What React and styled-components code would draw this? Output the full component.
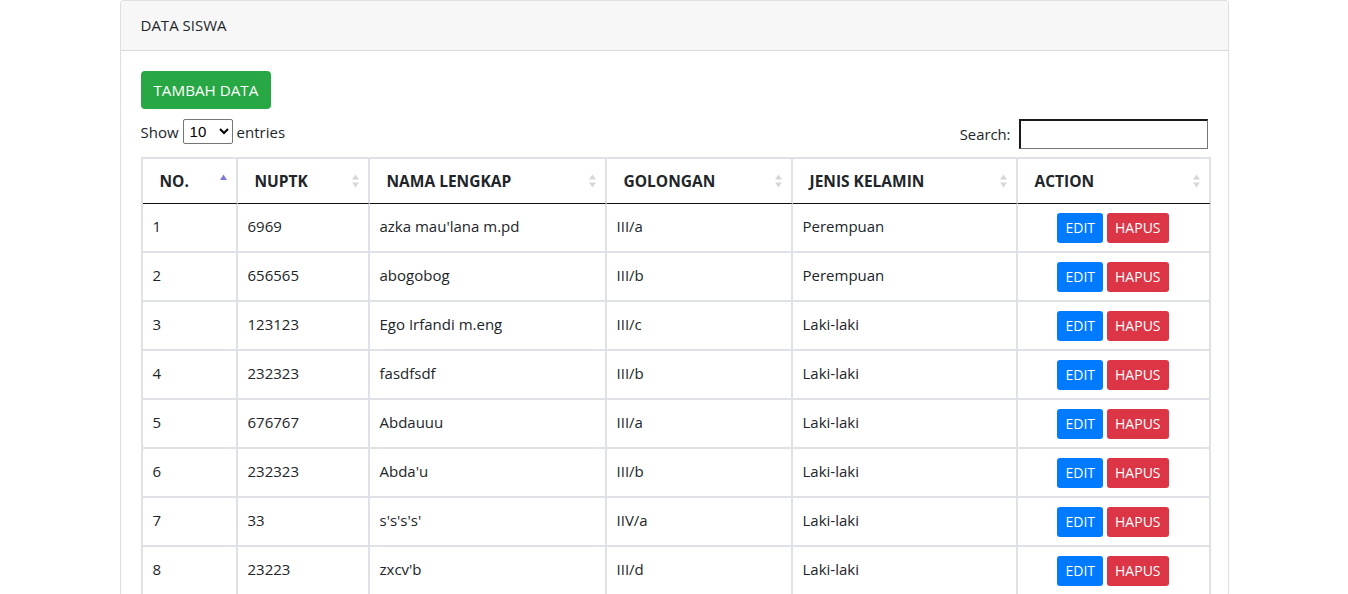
import React from "react"
import styled, { createGlobalStyle } from "styled-components"

const GlobalStyle = createGlobalStyle`
    * { box-sizing: border-box; }
    body {
        margin: 0;
        background: #fff;
        font-family: "Open Sans", "Noto Sans", sans-serif;
        font-size: 15px;
        line-height: 24px;
        color: #212529;
    }
`

const Container = styled.div`
    width: 1109px;
    margin: 0 auto;
`

const Card = styled.div`
    border: 1px solid rgba(0, 0, 0, 0.125);
    border-radius: 4px;
    background: #fff;
    overflow: hidden;
`

const CardHeader = styled.div`
    height: 50px;
    padding: 12px 20px;
    background: #f7f7f7;
    border-bottom: 1px solid rgba(0, 0, 0, 0.125);
    font-size: 15px;
`

const CardBody = styled.div`
    padding: 20px 20px 0;
`

const Button = styled.button`
    border: 0;
    border-radius: ${p => (p.small ? "3px" : "4px")};
    background: ${p => p.bg};
    color: #fff;
    font-family: inherit;
    font-size: ${p => (p.small ? "14px" : "15.2px")};
    line-height: ${p => (p.small ? "30px" : "38px")};
    height: ${p => (p.small ? "30px" : "38px")};
    padding: 0 ${p => (p.small ? "8px" : "13px")};
    cursor: pointer;
`

const Controls = styled.div`
    display: flex;
    justify-content: space-between;
    align-items: flex-start;
    margin-top: 10px;
    height: 38px;
`

const Length = styled.label`
    display: flex;
    align-items: center;
    gap: 4px;
    font-size: 15px;
`

const Select = styled.select`
    width: 50px;
    height: 25px;
    font-family: "Liberation Sans", sans-serif;
    font-size: 15px;
    border: 1px solid #767676;
    border-radius: 2px;
    background: #fff;
    color: #000;
    padding: 0 2px;
`

const Filter = styled.label`
    display: flex;
    align-items: center;
    gap: 8px;
    font-size: 14.8px;
`

const SearchInput = styled.input`
    width: 189px;
    height: 30px;
    border: 2px solid;
    border-color: #1a1a1a #767676 #767676 #1a1a1a;
    border-right-width: 1px;
    border-bottom-width: 1px;
    outline: none;
`

const Table = styled.table`
    width: 1068px;
    table-layout: fixed;
    border-collapse: separate;
    border-spacing: 0;
    border-top: 2px solid #dee2e6;
    border-left: 2px solid #dee2e6;
`

const Th = styled.th`
    position: relative;
    height: 45px;
    padding: 0 24px 0 17px;
    text-align: left;
    font-weight: 700;
    font-size: 15.5px;
    border-right: 2px solid #dee2e6;
    border-bottom: 1px solid #111;
`

const Td = styled.td`
    height: 49px;
    padding: 0 10px 3px;
    text-align: ${p => (p.center ? "center" : "left")};
    font-size: 15px;
    border-right: 2px solid #dee2e6;
    border-bottom: 2px solid #dee2e6;
`

const Actions = styled.div`
    display: flex;
    justify-content: center;
    gap: 4px;
    margin-top: 3px;
`

const SortIcon = styled.svg`
    position: absolute;
    right: 8px;
    top: 50%;
    transform: translateY(-50%);
`

function Sort({ asc }) {
    return (
        <SortIcon width="9" height="15" viewBox="0 0 9 15">
            {asc ? (
                <path d="M4.5 1 L8 6.5 H1 Z" fill="#7c7cd6" />
            ) : (
                <>
                    <path d="M4.5 1 L8 6 H1 Z" fill="#d6d6d6" />
                    <path d="M4.5 14 L8 9 H1 Z" fill="#d6d6d6" />
                </>
            )}
        </SortIcon>
    )
}

const columns = [
    { title: "NO.", width: 95, asc: true },
    { title: "NUPTK", width: 132 },
    { title: "NAMA LENGKAP", width: 237 },
    { title: "GOLONGAN", width: 186 },
    { title: "JENIS KELAMIN", width: 225 },
    { title: "ACTION", width: 193 },
]

const rows = [
    ["1", "6969", "azka mau'lana m.pd", "III/a", "Perempuan"],
    ["2", "656565", "abogobog", "III/b", "Perempuan"],
    ["3", "123123", "Ego Irfandi m.eng", "III/c", "Laki-laki"],
    ["4", "232323", "fasdfsdf", "III/b", "Laki-laki"],
    ["5", "676767", "Abdauuu", "III/a", "Laki-laki"],
    ["6", "232323", "Abda'u", "III/b", "Laki-laki"],
    ["7", "33", "s's's's'", "IIV/a", "Laki-laki"],
    ["8", "23223", "zxcv'b", "III/d", "Laki-laki"],
]

export default function App() {
    return (
        <>
            <GlobalStyle />
            <Container>
                <Card>
                    <CardHeader>DATA SISWA</CardHeader>
                    <CardBody>
                        <Button bg="#28a745">TAMBAH DATA</Button>
                        <Controls>
                            <Length>
                                Show
                                <Select defaultValue="10">
                                    <option>10</option>
                                    <option>25</option>
                                    <option>50</option>
                                    <option>100</option>
                                </Select>
                                entries
                            </Length>
                            <Filter>
                                Search:
                                <SearchInput type="search" />
                            </Filter>
                        </Controls>
                        <Table>
                            <colgroup>
                                {columns.map(c => (
                                    <col key={c.title} style={{ width: c.width }} />
                                ))}
                            </colgroup>
                            <thead>
                                <tr>
                                    {columns.map(c => (
                                        <Th key={c.title}>
                                            {c.title}
                                            <Sort asc={c.asc} />
                                        </Th>
                                    ))}
                                </tr>
                            </thead>
                            <tbody>
                                {rows.map(r => (
                                    <tr key={r[0]}>
                                        {r.map((v, i) => (
                                            <Td key={i}>{v}</Td>
                                        ))}
                                        <Td center>
                                            <Actions>
                                                <Button small bg="#007bff">EDIT</Button>
                                                <Button small bg="#dc3545">HAPUS</Button>
                                            </Actions>
                                        </Td>
                                    </tr>
                                ))}
                            </tbody>
                        </Table>
                    </CardBody>
                </Card>
            </Container>
        </>
    )
}
